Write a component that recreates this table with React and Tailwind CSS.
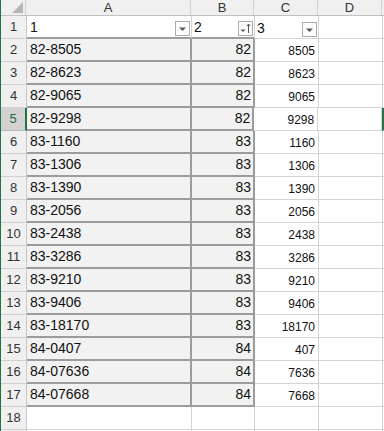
const rows = [
  ["82-8505", 82, 8505],
  ["82-8623", 82, 8623],
  ["82-9065", 82, 9065],
  ["82-9298", 82, 9298],
  ["83-1160", 83, 1160],
  ["83-1306", 83, 1306],
  ["83-1390", 83, 1390],
  ["83-2056", 83, 2056],
  ["83-2438", 83, 2438],
  ["83-3286", 83, 3286],
  ["83-9210", 83, 9210],
  ["83-9406", 83, 9406],
  ["83-18170", 83, 18170],
  ["84-0407", 84, 407],
  ["84-07636", 84, 7636],
  ["84-07668", 84, 7668],
];

const FilterButton = ({ sorted }) => (
  <div className="w-[15px] h-[15px] mb-[1px] mr-[1px] border border-[#acacac] bg-[#fcfcfc] flex items-center justify-center shrink-0">
    {sorted ? (
      <svg width="13" height="13" viewBox="0 0 13 13">
        <path d="M1.5 7.5h5l-2.5 2.5z" fill="#5a5a5a" />
        <path d="M9.5 2v9M7.8 4l1.7-2 1.7 2" stroke="#5a5a5a" strokeWidth="1" fill="none" />
      </svg>
    ) : (
      <svg width="9" height="6" viewBox="0 0 9 6">
        <path d="M1 1.5h7l-3.5 3.5z" fill="#5a5a5a" />
      </svg>
    )}
  </div>
);

const ColHead = ({ w, children }) => (
  <div className={`${w} h-full border-r border-[#d0d0d0] flex items-center justify-center text-[13px] text-[#333]`}>
    {children}
  </div>
);

const RowHead = ({ n, selected }) => (
  <div
    className={`w-[26px] h-full shrink-0 flex items-center justify-center text-[13px] border-b ${
      selected
        ? "bg-[#d2d2d2] text-[#1e6b41] border-r-2 border-r-[#217346] border-b-[#b8b8b8]"
        : "bg-[#f0f0f0] text-[#333] border-r border-r-[#c8c8c8] border-b-[#d0d0d0]"
    }`}
  >
    {n}
  </div>
);

export default function App() {
  return (
    <div className="w-[384px] h-[431px] overflow-hidden bg-white border-l border-[#217346] font-['Liberation_Sans',Arial,sans-serif] text-[#111]">
      {/* column headers */}
      <div className="flex h-[16px] bg-[#f0f0f0] border-b border-[#c2c2c2]">
        <div className="w-[25px] h-full border-r border-[#d0d0d0] flex items-end justify-end pr-[2px] pb-[2px]">
          <svg width="11" height="11" viewBox="0 0 11 11">
            <path d="M11 0v11H0z" fill="#b6b6b6" />
          </svg>
        </div>
        <ColHead w="w-[165px]">A</ColHead>
        <ColHead w="w-[63px]">B</ColHead>
        <ColHead w="w-[64px]">C</ColHead>
        <ColHead w="w-[64px]">D</ColHead>
        <div className="flex-1" />
      </div>

      {/* header row with filters */}
      <div className="flex h-[23px]">
        <RowHead n={1} />
        <div className="w-[165px] flex items-end justify-between pl-[3px] border-r border-[#d4d4d4] border-b-2 border-b-[#9c9c9c] text-[14px] leading-[20px]">
          <span>1</span>
          <FilterButton />
        </div>
        <div className="w-[63px] flex items-end justify-between pl-[2px] border-r border-[#d4d4d4] border-b-2 border-b-[#9c9c9c] text-[14px] leading-[20px]">
          <span>2</span>
          <FilterButton sorted />
        </div>
        <div className="w-[64px] flex items-end justify-between pl-[2px] border-r border-b border-[#d4d4d4] text-[14px] leading-[20px]">
          <span>3</span>
          <FilterButton />
        </div>
        <div className="w-[64px] border-r border-b border-[#d4d4d4]" />
        <div className="flex-1 border-b border-[#d4d4d4]" />
      </div>

      {rows.map(([a, b, c], i) => {
        const n = i + 2;
        const selected = n === 5;
        return (
          <div key={n} className="flex h-[23px]">
            <RowHead n={n} selected={selected} />
            <div className="w-[165px] flex items-end pl-[3px] pb-[1px] bg-[#f2f2f2] border-r-2 border-b-2 border-[#9c9c9c] text-[14px] leading-[19px]">
              {a}
            </div>
            <div className="w-[63px] flex items-end justify-end pr-[2px] pb-[1px] bg-[#f2f2f2] border-r-2 border-b-2 border-[#9c9c9c] text-[14px] leading-[19px]">
              {b}
            </div>
            <div className="w-[64px] flex items-end justify-end pr-[3px] pb-[2px] border-r border-b border-[#d4d4d4] text-[12px] leading-[16px]">
              {c}
            </div>
            <div className="w-[64px] border-r border-b border-[#d4d4d4]" />
            <div className={`flex-1 border-b border-[#d4d4d4] ${selected ? "border-l-2 border-l-[#217346]" : ""}`} />
          </div>
        );
      })}

      <div className="flex h-[23px]">
        <RowHead n={18} />
        <div className="w-[165px] border-r border-b border-[#d4d4d4]" />
        <div className="w-[63px] border-r border-b border-[#d4d4d4]" />
        <div className="w-[64px] border-r border-b border-[#d4d4d4]" />
        <div className="w-[64px] border-r border-b border-[#d4d4d4]" />
        <div className="flex-1 border-b border-[#d4d4d4]" />
      </div>
      <div className="flex h-[23px]">
        <div className="w-[26px] h-full bg-[#f0f0f0] border-r border-[#c8c8c8]" />
        <div className="w-[165px] border-r border-[#d4d4d4]" />
        <div className="w-[63px] border-r border-[#d4d4d4]" />
        <div className="w-[64px] border-r border-[#d4d4d4]" />
        <div className="w-[64px] border-r border-[#d4d4d4]" />
      </div>
    </div>
  );
}
